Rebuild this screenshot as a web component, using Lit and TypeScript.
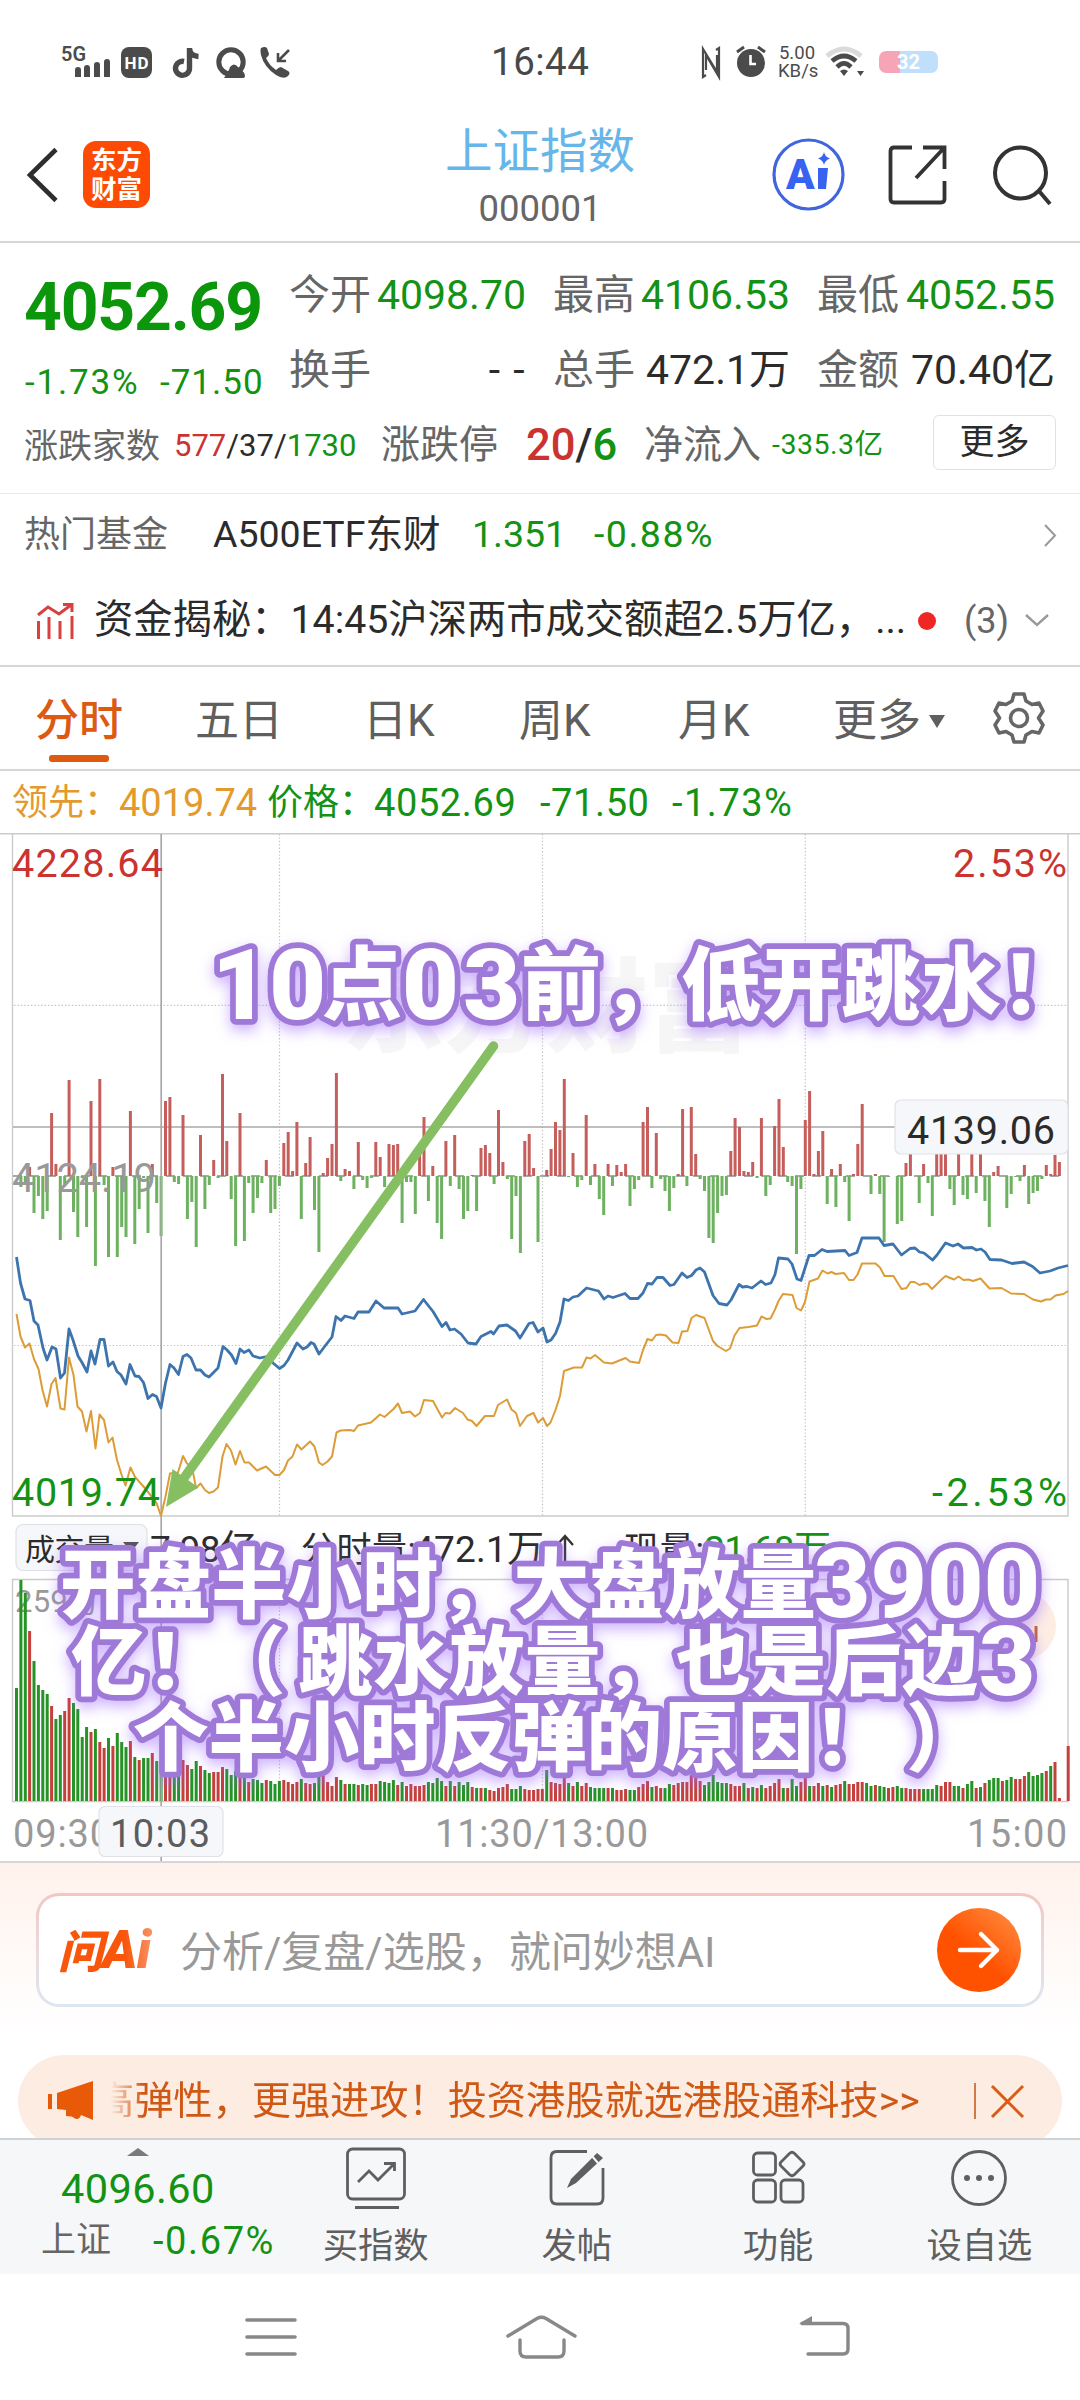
import { LitElement, html, svg, css } from 'lit';
import { customElement } from 'lit/decorators.js';

/* Minute momentum bars: positive is drawn upwards in red, negative downwards in green. */
const MOMENTUM = [
  0, -11, -7, 9, -37, -20, -43, -35, 63, 12, -64, -10, 96, -36, -61, -2, -51, 75, -90, 97,
  -9, -81, 9, -81, -51, -61, 65, -68, -33, -2, -57, 12, -27, -60, 75, 79, -6, -8, 61, -43,
  -26, -71, 41, -33, -9, 16, -2, 102, 35, -23, -70, 63, -65, -7, -37, -22, -7, 16, -37, -33,
  -10, 33, 44, 5, 54, -43, 13, 39, -34, -76, 3, 18, 32, 103, -5, 7, 5, -13, 34, -4,
  -12, -2, 34, 19, -11, 32, 31, 32, -47, -6, -6, -38, 21, 59, -25, 10, -47, -63, 35, -10,
  41, -13, -43, -35, 1, -35, 28, 31, 23, -8, 66, 14, -3, -63, -20, -77, 35, 42, 8, -66,
  0, 6, 27, 54, 46, 97, -1, 23, -11, -4, 61, -9, 12, -23, -39, 12, -10, 11, 4, 12,
  -30, -13, -4, 54, 69, -12, 43, -3, -15, -35, -12, 2, 67, -10, 69, 22, -3, -15, -62, -67,
  -37, -20, -19, 25, 58, 49, 5, 4, 14, -2, 58, -20, -9, 50, 77, 29, -6, -10, -78, -13,
  56, 85, 2, 25, 45, -28, 7, -31, 12, -6, -45, 2, 32, 72, 0, -18, 2, -18, -66, -1,
  0, -48, -45, 13, 25, 0, -27, 12, -7, -40, 40, 45, 35, -13, -29, 35, -19, -23, 35, -17,
  30, -25, -51, 4, 10, 0, -32, -18, -1, -5, 11, -28, -17, -15, -3, 11, 2, 21, 14,
];

/* Minute volume: the sign carries the colour, the magnitude the height. */
const VOLUME = [
  -113, -221, -208, 170, -140, -116, -111, -107, 95, -82, -86, 90, 103, -98, -92, -64, -74, 69, -72, 59,
  53, -63, 55, -68, -59, -54, 60, -44, 41, -43, -43, 48, -40, -40, 26, 26, -26, -28, 41, 36,
  -32, -40, 35, -31, -28, 29, 29, 34, -32, -26, -30, 24, -23, 19, -22, -21, -18, 21, -20, -17,
  -20, 21, 19, 17, 19, -22, 18, 17, -18, -24, 25, 19, 15, 24, -21, 17, -17, -17, 16, -17,
  -16, 17, 17, -20, -19, -18, -21, 16, -19, 15, 17, 15, 15, 16, -19, -18, -23, -20, 15, -20,
  15, -19, -16, -19, 14, -13, 13, -13, 11, 10, 13, 14, 17, -12, -12, -15, 12, 11, 11, 12,
  12, -31, 19, 18, 17, 23, -18, 15, -19, 15, 18, -14, -13, -13, -13, 13, -13, 11, 11, 12,
  -11, -11, 14, 17, 20, -14, 15, 13, -13, -17, 16, 18, 19, 19, 26, 24, 20, -16, -19, -26,
  -19, -18, -18, 17, 15, 15, -18, 13, -14, 13, -16, 13, 15, 18, 22, -13, 13, -22, -15, 19,
  24, -15, 15, 18, -15, 16, -14, 16, 17, -20, 17, 17, 19, 19, -18, -15, 16, -15, -14, 13,
  14, -15, -13, 13, 12, 12, 12, -12, -12, -12, -16, 15, 19, 19, -15, -15, 13, -17, -20, 13,
  -14, 18, -21, -23, -23, 20, -21, -24, 22, 22, 25, -29, -25, -26, -28, 30, -35, 39, 3, 0,
  55,
];

const PRICE_LINE =
  '16.5,1257 20.5,1283 25,1299 30,1300.5 34,1321 38,1325 43,1348 47,1360 52,1347 56,1349 60.5,1378 64.5,1373 69,1329 73,1340 78,1356 82,1362.5 87,1372 91,1351 95,1364 100,1339.5 104,1339.5 108.5,1366 113,1362 117,1371.5 121,1375 126,1384 130,1364.5 135,1376 139,1376.5 143.5,1382.5 148,1398.5 152.5,1394.5 156.5,1396.5 161,1408 165.5,1383 170,1364.5 174,1368 178.5,1374.5 183,1356.5 187,1354.5 191,1358 196,1370 200.5,1370 205,1375 209,1377 213,1373 218,1368 223,1346.5 227,1350 231.5,1355 236,1363.5 240,1349 244,1352.5 249,1350 253,1356 260,1358 267,1356.5 273,1363 279.5,1368.5 284,1365.5 288,1360 297,1343 303,1349 307,1347 311,1342.5 314,1344 319,1354 325,1346 332,1337 336,1316.5 341,1320.5 345,1316 354,1318.5 358,1312 369,1312 376,1301 384,1308 398,1308 402,1314 415,1311 423.5,1299.5 433,1311.5 442,1326.5 446,1322.5 450,1330 454.5,1329 461,1334 468,1343 476,1344 481,1336.5 491,1331.5 493.5,1334 499,1326 507,1325 515.5,1331 520,1338 529,1323.5 533,1322.5 538,1332 543,1328 547,1342 551,1340 555.5,1333.5 560,1322 564,1299 568.5,1300.5 573,1297 578,1296 586.5,1288 598.5,1291 604,1299 608,1296 613,1297.5 625,1293.5 630,1298.5 638,1298.5 643,1293 647.5,1283.5 652,1284 657,1277.5 663,1277.5 670,1285.5 674,1284.5 682,1273 687,1277.5 691.5,1275.5 696,1270 700,1268 704.5,1272 713,1295.5 719,1303.5 727,1305 731,1300 739,1284.5 742.5,1287 747,1286.5 752,1288 761,1281 765.5,1284.5 771,1283 775,1274.5 778.5,1258 788,1259 792,1264 797,1279 801,1280.5 805.5,1266.5 809,1255.5 814.5,1255.5 822,1249.5 827,1251.5 845,1250.5 849,1255.5 857,1252.5 862,1238 879,1238 884,1245.5 893,1244 901.5,1255 910,1248.5 915,1248 919.5,1252 924,1253 932.5,1260 937,1255 945.5,1243 953,1246 958,1244 963.5,1248 972,1247.5 976.5,1250 981,1249 985,1252 990,1259.5 1001.5,1260 1012,1263.5 1024,1262 1032.5,1266.5 1040,1273 1050,1271 1058,1268 1068,1265.5';

const LEAD_LINE =
  '16.5,1314 20.5,1336.5 25,1347.5 29.5,1343.5 34,1359 38.5,1369 42.5,1390 47,1406.5 51.5,1384 55.5,1378 60.5,1408.5 64.5,1409.5 69,1357.5 73.5,1375 77.5,1406.5 82,1411.5 86.5,1431.5 91,1411 95.5,1448.5 99.5,1414.5 104,1420 108.5,1442.5 112.5,1437.5 117,1460 121.5,1474.5 125.5,1485.5 130.5,1467.5 135,1477 143.5,1486.5 152,1497 156.5,1503 161,1516 165.5,1496.5 170,1473.5 178,1472.5 183,1456 187,1463.5 192,1467 196,1488 200.5,1483.5 205,1490 209,1493 213.5,1491.5 218,1487.5 222.5,1456.5 226.5,1444 231,1450.5 235.5,1464.5 240,1451 244.5,1462.5 249,1462.5 257,1470.5 266,1466.5 275,1475 279.5,1475 284,1470 288,1460.5 292.5,1456.5 297,1444.5 301.5,1449.5 310,1441.5 314.5,1446.5 319,1462.5 322.5,1465 327.5,1461.5 332,1456.5 336.5,1432.5 340.5,1430.5 350,1430 354,1431 358,1425.5 371,1422.5 380,1414.5 384.5,1417 393.5,1409 398,1403.5 402,1413 410,1411.5 415,1416.5 420,1413 424,1400 433,1401 442,1417.5 445.5,1413 450,1413.5 455,1408 463,1413 467.5,1419.5 472,1421 476.5,1426 485,1416 494,1416 498,1405 507,1399.5 511.5,1409.5 516,1413 520,1426 527,1416 533.5,1413 538,1422.5 543,1418 547,1426 550.5,1422.5 555.5,1410 560,1396 564,1371 574,1367.5 582,1367.5 586.5,1357.5 590.5,1358.5 595,1355 604,1362.5 612,1363.5 625.5,1358 630,1361.5 639,1363 643,1350 647.5,1339 652,1340.5 656,1335 660.5,1334.5 666,1335.5 672.5,1342.5 678.5,1343 682,1331.5 687.5,1331 691.5,1318 696,1315 704.5,1318 713,1341 717.5,1346 726,1351 730,1348.5 734.5,1335.5 739.5,1328 748.5,1327 757,1325.5 761.5,1316.5 766.5,1319 770.5,1318.5 775,1309.5 778.5,1301 783,1294 792.5,1295 796.5,1308 801,1310.5 805,1302 809.5,1281.5 818,1278.5 822.5,1270.5 827.5,1273.5 831.5,1272 835.5,1274 844,1273 849,1280 853.5,1280 857.5,1274.5 862,1263.5 875.5,1263.5 880,1267.5 884.5,1276 893.5,1276 901.5,1289 906.5,1288 910.5,1282 914.5,1282 919.5,1285 924,1283.5 927.5,1284 932,1289 941,1280 945.5,1276 954,1279.5 958.5,1276.5 963.5,1280 968.5,1279.5 973,1281 980.5,1278.5 989.5,1288.5 1001.5,1288 1011,1293.5 1024,1294 1033,1299.5 1041,1301.5 1046,1299.5 1050.5,1299.5 1055.5,1295.5 1063.5,1294 1068,1291';

const STEP = 4.382;
const FIRST = 16.5;

function bars(data: number[], base: number, grow: boolean, negative: boolean) {
  let d = '';
  data.forEach((v, i) => {
    if (v === 0 || v < 0 !== negative) return;
    const x = (FIRST + i * STEP).toFixed(1);
    const h = Math.abs(v);
    d += `M${x} ${base}v${!grow && negative ? h : -h}`;
  });
  return d;
}

function label(x: number, y: number, size: number, cls: string, text: string, len: number) {
  return svg`<text class=${cls} x=${x} y=${y} font-size=${size} textLength=${len} lengthAdjust="spacing">${text}</text>`;
}

/* One run of an outlined caption. */
function run(x: number, y: number, size: number, text: string, len: number, digits = false) {
  return svg`<text class=${digits ? 'cap num' : 'cap'} x=${x} y=${y} font-size=${size} textLength=${len}>${text}</text>`;
}

@customElement('intraday-chart')
export class IntradayChart extends LitElement {
  static styles = css`
    :host { display: block; }
    svg { display: block; }
    text { font-family: Roboto, 'Noto Sans CJK SC', sans-serif; white-space: pre; }
    .red { fill: #cb3331; }
    .green { fill: #139213; }
    .gray { fill: #999; }
    .ink { fill: #2b2b2b; }
    .mid { fill: #5c5c5c; }
    .frame { fill: none; stroke: #cbcbcb; stroke-width: 1.4; }
    .dots { stroke: #c4c4c4; stroke-width: 1.2; stroke-dasharray: 1.4 2; }
    .cross { stroke: #a8a8a8; stroke-width: 1.7; }
    .up { stroke: #c65e5b; stroke-width: 3; fill: none; }
    .down { stroke: #6db161; stroke-width: 3; fill: none; }
    .vup { stroke: #c4403d; stroke-width: 3; fill: none; }
    .vdown { stroke: #259325; stroke-width: 3; fill: none; }
    .tag { fill: #f6f7fa; stroke: #dfe1e6; stroke-width: 1.2; }
    .price { fill: none; stroke: #3d74ad; stroke-width: 2.8; stroke-linejoin: round; }
    .lead { fill: none; stroke: #dc9c38; stroke-width: 2; stroke-linejoin: round; }
    .mark { fill: #f6f6f6; font-weight: 900; font-family: 'Noto Sans CJK SC', sans-serif; }
    .cap {
      font-family: 'Noto Sans CJK SC', sans-serif; font-weight: 900;
      fill: #fff; stroke: #9f79d8; stroke-width: 11.5; stroke-linejoin: round; paint-order: stroke;
    }
    .num { font-family: Roboto, sans-serif; }
    .glow { filter: drop-shadow(0 6px 7px rgba(160, 105, 255, 0.5)); }
  `;

  render() {
    return html`<svg width="1080" height="1028" viewBox="0 833 1080 1028">
      ${label(342, 1044, 102, 'mark', '东方财富', 408)}
      <path class="frame" d="M0 833.7H1080M12.5 834V1516H1068V834" />
      <path class="dots" d="M14 1005.3H1068M14 1345.5H1068M279.5 834V1516M542.5 834V1516M805.3 834V1516" />
      <path d="M13 1176H1062" stroke="#8d8d8d" stroke-width="1.4" stroke-dasharray="9 8" />
      <path class="cross" d="M13 1127H1068" />
      <path class="up" d=${bars(MOMENTUM, 1176, false, false)} />
      <path class="down" d=${bars(MOMENTUM, 1176, false, true)} />
      <path class="cross" d="M161.2 834V1516" />
      ${label(12, 1191.5, 40, 'gray', '4124.19', 144)}
      ${label(12, 877, 39.5, 'red', '4228.64', 151)}
      ${label(953, 877, 39.5, 'red', '2.53%', 114)}
      ${label(932, 1506, 39.5, 'green', '-2.53%', 135)}
      <polyline class="lead" points=${LEAD_LINE} />
      <polyline class="price" points=${PRICE_LINE} />
      ${label(12, 1506, 39.5, 'green', '4019.74', 148)}
      <rect class="tag" x="895" y="1100" width="173" height="54" rx="6" />
      ${label(907, 1144, 39.5, 'ink', '4139.06', 148)}

      <path class="frame" d="M12.5 1579.5H1068V1801.5H12.5Z" />
      <path class="dots" d="M279.5 1580V1801M542.5 1580V1801M805.3 1580V1801" />
      <circle cx="1022" cy="1626" r="34" fill="#fdeee4" />
      <path d="M1036 1626V1642" stroke="#c2663a" stroke-width="3" />
      ${label(15, 1612, 31, 'gray', '259万', 84)}
      <path class="vup" d=${bars(VOLUME, 1801, true, false)} />
      <path class="vdown" d=${bars(VOLUME, 1801, true, true)} />
      <path class="cross" d="M161.2 1516V1861" />
      <rect class="tag" x="16" y="1524.5" width="131" height="46" rx="7" />
      ${label(25, 1560, 30, 'ink', '成交量', 89)}
      <path d="M123 1542H139L131 1552Z" fill="#555" />
      ${label(150, 1562, 37, 'ink', '7.98亿', 107)}
      ${label(301, 1562, 35, 'ink', '分时量:', 115)}
      ${label(413, 1562, 37, 'ink', '472.1万', 131)}
      <path d="M565 1563V1536M557 1545L565 1536L573 1545" fill="none" stroke="#333" stroke-width="2.4" />
      ${label(624, 1562, 35, 'ink', '现量:', 80)}
      ${label(704, 1562, 37, 'green', '21.68万', 127)}

      ${label(13, 1847, 38, 'gray', '09:30', 98)}
      ${label(435, 1847, 38, 'gray', '11:30/13:00', 213)}
      ${label(967, 1847, 38, 'gray', '15:00', 100)}
      <rect class="tag" x="99" y="1806.5" width="124" height="50" rx="6" />
      ${label(110, 1847, 38, 'mid', '10:03', 100)}

      <path d="M493.5 1046L184 1478" stroke="#86bf62" stroke-width="9.5" stroke-linecap="round" />
      <path d="M166 1507L172.5 1469L198.5 1487.5Z" fill="#86bf62" />

      <g class="glow">
        ${run(212, 1019, 98, '10', 114, true)}
        ${run(322, 1013, 80, '点', 80)}
        ${run(402, 1019, 98, '03', 118, true)}
        ${run(521, 1013, 80, '前，低开跳水！', 560)}
      </g>
      <g class="glow">
        ${run(60, 1612, 75.6, '开盘半小时，大盘放量', 756)}
        ${run(814, 1617, 97, '3900', 226, true)}
        ${run(71, 1689, 75.6, '亿！', 151)}
        ${run(210, 1689, 75.6, '（', 75.6)}
        ${run(298, 1689, 75.6, '跳水放量，也是后边', 680)}
        ${run(979, 1695, 97, '3', 56, true)}
        ${run(133, 1765, 75.6, '个半小时反弹的原因！', 756)}
        ${run(906, 1765, 75.6, '）', 75.6)}
      </g>
    </svg>`;
  }
}

@customElement('app-root')
export class AppRoot extends LitElement {
  static styles = css`
    :host {
      display: block; width: 1080px; height: 2400px; overflow: hidden; background: #fff;
      color: #2b2b2b; font-family: Roboto, 'Noto Sans CJK SC', sans-serif; line-height: 1;
    }
    * { box-sizing: border-box; }
    svg { display: block; flex: none; overflow: visible; }
    .g { color: #139213; }
    .r { color: #cb3331; }
    .k { color: #666; }
    .status { height: 108px; padding: 16px 0 0; display: grid; grid-template-columns: 62px 429px 210px 1fr; align-items: center; }
    .sl { grid-column: 2; display: grid; grid-template-columns: 59px 51px 43px 44px 32px; align-items: center; }
    .clock { font-size: 38.5px; color: #484848; letter-spacing: 0.5px; }
    .sr { display: grid; grid-template-columns: 35px 42px 48px 53px 59px; align-items: center; }
    .speed { font-size: 18.5px; line-height: 18px; color: #4b4b4b; text-align: center; width: 38px; }
    .batt { height: 22px; border-radius: 7px; background: linear-gradient(90deg, #f5a5b5 36%, #bfdffc 36%); color: #fff; font-size: 20px; font-weight: 700; display: grid; place-items: center; }
    .head { height: 135px; border-bottom: 2px solid #d6d6d6; display: grid; grid-template-columns: 27px 56px 317px 280px 92px 1fr; align-items: center; }
    .logo { grid-column: 3; width: 67px; height: 67px; border-radius: 13px; background: #fd4a05; color: #fff; font-size: 25.5px; line-height: 29px; font-weight: 700; display: grid; place-content: center; text-align: center; }
    .back { grid-column: 2; }
    .title { text-align: center; padding-top: 7px; }
    .name { font-size: 47.5px; color: #66b6ea; }
    .code { font-size: 36.5px; color: #666; margin-top: 15px; }
    .acts { grid-column: 6; display: grid; grid-template-columns: 116px 105px 60px; align-items: center; }
    .stats { height: 251px; padding: 15px 25px 0; border-bottom: 1px solid #e9e9e9; }
    .top { display: grid; grid-template-columns: 264px 766px; height: 150px; }
    .main { padding-top: 17px; }
    .big { font-size: 66px; font-weight: 700; letter-spacing: -1.2px; color: #0c960c; margin-left: -1px; }
    .chg { margin-top: 24px; font-size: 35px; display: grid; grid-template-columns: 135px 1fr; }
    .chg span { letter-spacing: 1px; white-space: nowrap; }
    .chg span:first-child { letter-spacing: 1.8px; }
    .cells { display: grid; grid-template-columns: 237px 237px 238px; column-gap: 27px; grid-auto-rows: 75px; }
    .cell { display: flex; justify-content: space-between; align-items: center; font-size: 41px; white-space: nowrap; }
    .cell .k { font-size: 41px; }
    .more-row { height: 75px; margin-left: -1px; display: grid; grid-template-columns: 150px 207px 145px 118px 128px 161px 123px; align-items: center; white-space: nowrap; }
    .f33 { font-size: 34px; }
    .f31 { font-size: 31px; }
    .f38 { font-size: 39px; }
    .f29 { font-size: 28.5px; letter-spacing: 0.5px; }
    .lim { font-size: 43.5px; font-weight: 500; }
    .btn { height: 55px; border: 1.5px solid #dfe2e4; border-radius: 6px; font-size: 35px; display: grid; place-items: center; margin-top: -6px; }
    .fund { height: 80px; padding: 2px 0 0 24px; display: grid; grid-template-columns: 189px 259px 122px 450px 1fr; align-items: center; font-size: 37.5px; white-space: nowrap; }
    .fund .k { font-size: 36px; }
    .pc { letter-spacing: 1.5px; }
    .news { height: 93px; border-bottom: 2px solid #d6d6d6; padding: 2px 0 0 36px; display: grid; grid-template-columns: 58px 824px 46px 61px 1fr; align-items: center; white-space: nowrap; font-size: 39.3px; }
    .dot { width: 18px; height: 18px; border-radius: 50%; background: #ee2724; }
    .cnt { font-size: 36px; color: #666; }
    .tabs { height: 104px; border-bottom: 2px solid #d6d6d6; padding-left: 35px; display: grid; grid-template-columns: 160px 168px 156px 159px 155px 160px 1fr; align-items: center; font-size: 44px; color: #5f5f5f; }
    .tab { display: flex; align-items: center; height: 100%; position: relative; padding-top: 6px; }
    .on { color: #dc5a12; font-weight: 500; }
    .on::after { content: ''; position: absolute; left: 14px; bottom: 7px; width: 60px; height: 7px; border-radius: 3px; background: #df590f; }
    .caret { margin-left: 8px; border: 8px solid transparent; border-top: 13px solid #5f5f5f; border-bottom: 0; }
    .legend { height: 62px; padding: 2px 0 0 12px; display: grid; grid-template-columns: 107px 148px 107px 166px 132px 1fr; align-items: center; font-size: 38px; letter-spacing: 0.6px; white-space: nowrap; }
    .legend .c { font-size: 36px; letter-spacing: 0; }
    .legend .o:nth-child(2) { letter-spacing: 0; }
    .o { color: #e39a2c; }
    .ai { height: 277px; border-top: 2px solid #d6d6d6; padding: 30px 18px 0; background: linear-gradient(#fff2ec, #fffaf8 100px, #fff 170px); overflow: hidden; }
    .ask { margin: 0 18px; height: 114px; border: 3px solid transparent; border-radius: 23px; padding: 0 20px 0 19px; display: flex; align-items: center; background: linear-gradient(#fff, #fff) padding-box, linear-gradient(#f3c7c0, #ead9dd 50%, #dde6f0) border-box; }
    .wen { width: 122px; font-size: 54px; font-weight: 900; font-style: italic; letter-spacing: -1px; background: linear-gradient(90deg, #f9560b 55%, #f99a72 80%); -webkit-background-clip: text; background-clip: text; color: transparent; padding: 4px 0; white-space: nowrap; }
    .wen b { font-size: 45px; font-weight: 900; }
    .ph { flex: 1; font-size: 42px; color: #999; padding-top: 5px; }
    .go { width: 84px; height: 84px; border-radius: 50%; background: linear-gradient(40deg, #ff5200 45%, #ff9145); display: grid; place-items: center; }
    .ban { margin-top: 48px; height: 92px; border-radius: 46px; background: #fcece2; padding-left: 30px; display: grid; grid-template-columns: 63px 863px 17px 1fr; align-items: center; color: #cf5815; font-size: 39.2px; white-space: nowrap; }
    .roll { overflow: hidden; line-height: 50px; text-indent: -16px; -webkit-mask: linear-gradient(90deg, transparent, #000 32px); mask: linear-gradient(90deg, transparent, #000 32px); }
    .bar { width: 2px; height: 36px; background: #cf7a48; }
    .foot { height: 136px; background: #f6f7f9; border-top: 2px solid #cfd2d4; display: grid; grid-template-columns: 275px repeat(4, 201.25px); }
    .idx { display: grid; grid-template-rows: 28px 54px 1fr; white-space: nowrap; }
    .tri { margin: 8px 0 0 127px; width: 0; height: 0; border: 11px solid transparent; border-bottom: 8px solid #7a7a7a; border-top: 0; }
    .v { padding-left: 61px; font-size: 41.5px; letter-spacing: 0.4px; }
    .w { padding-left: 41px; display: grid; grid-template-columns: 112px 1fr; font-size: 38px; letter-spacing: 1.6px; }
    .w .k { font-size: 35px; letter-spacing: 0; padding-top: 1px; }
    .act { display: flex; flex-direction: column; align-items: center; font-size: 35.3px; color: #5f5f5f; padding-top: 7px; }
    .act svg { margin-bottom: 20px; }
    .nav { height: 126px; display: grid; grid-template-columns: 245px 261px 292px 1fr; align-items: center; }
    .nav svg:first-child { grid-column: 2; }
  `;

  private cell(name: string, value: string, cls = '') {
    return html`<div class="cell"><span class="k">${name}</span><span class=${cls}>${value}</span></div>`;
  }

  render() {
    return html`
      <div class="status">
        <div class="sl">
          <svg width="50" height="34" viewBox="0 0 50 34" fill="#4b4b4b">
            <text x="-1" y="16" font-size="20" font-weight="600" textLength="25" lengthAdjust="spacingAndGlyphs">5G</text>
            <path d="M13 25a2.500 2.500 0 0 1 6 0v7h-6zM22 23a2.500 2.500 0 0 1 6 0v9h-6zM32 20a2.500 2.500 0 0 1 6 0v12h-6zM42 17a2.500 2.500 0 0 1 6 0v15h-6z" />
          </svg>
          <svg width="31" height="31" viewBox="0 0 31 31"><rect width="31" height="31" rx="8" fill="#4b4b4b" /><text x="3.500" y="21.500" font-size="17" font-weight="700" fill="#fff" textLength="24">HD</text></svg>
          <svg width="28" height="31" viewBox="0 0 28 31" fill="none" stroke="#4b4b4b" stroke-width="5.400"><path d="M12 14.500A7 7 0 1 0 17.500 21V1M17.500 1.500Q18 9 26.500 9.500" /></svg>
          <svg width="32" height="31" viewBox="0 0 32 31"><circle cx="16" cy="15" r="12.200" fill="none" stroke="#4b4b4b" stroke-width="5" /><path d="M9 31Q14 24 15 20Q19 15 23 20Q30 25 30 29Q30 31 27 31Z" fill="#4b4b4b" /></svg>
          <svg width="32" height="31" viewBox="0 0 32 31" fill="#4b4b4b"><path d="M2 1Q6 -1 8 1L10 7Q10 9 7 11Q10 18 17 23Q20 20 22 20L29 24Q32 26 29 29Q25 33 17 28Q5 20 2 8Q1 3 2 1Z" /><path d="M30 3L20 13M19 6V14H27" fill="none" stroke="#4b4b4b" stroke-width="2.600" /></svg>
        </div>
        <span class="clock">16:44</span>
        <div class="sr">
          <svg width="20" height="31" viewBox="0 0 20 31" fill="none" stroke="#4b4b4b" stroke-width="2.200"><path d="M5 28L2 30V2L16 25V8M15 3L18 1V30L5 8V23" /></svg>
          <svg width="30" height="32" viewBox="0 0 30 32"><circle cx="15" cy="17" r="14" fill="#4b4b4b" /><path d="M14.500 9V18H20" fill="none" stroke="#fff" stroke-width="2.600" /><path d="M1 6L8 1M29 6L22 1" stroke="#4b4b4b" stroke-width="3" /></svg>
          <span class="speed">5.00 KB/s</span>
          <svg width="38" height="30" viewBox="0 0 38 30" fill="none" stroke="#4b4b4b" stroke-width="4.600"><path d="M1 9Q18 -5 35 9" stroke="#dadada" stroke-width="5" /><path d="M6 14Q18 4 30 14M11 20Q18 13 25 20" /><path d="M14 24Q18 21 22 24L18 29Z" fill="#4b4b4b" stroke="none" /><path d="M31 24H38L34.500 29Z" fill="#4b4b4b" stroke="none" /></svg>
          <span class="batt">32</span>
        </div>
      </div>

      <div class="head">
        <svg class="back" width="31" height="54" viewBox="0 0 31 54" fill="none" stroke="#2e2e2e" stroke-width="4.600"><path d="M29 1.500L3 27L29 52.500" /></svg>
        <div class="logo">东方<br />财富</div>
        <div class="title"><div class="name">上证指数</div><div class="code">000001</div></div>
        <div class="acts">
          <svg width="73" height="73" viewBox="0 0 73 73"><circle cx="36.500" cy="36.500" r="34.500" fill="#fff" stroke="#4065dc" stroke-width="3.200" /><text x="14" y="51" font-size="42" font-weight="900" fill="#3763f0">A</text><path d="M46 30H56L54 51H46Z" fill="#3763f0" /><path d="M52 14Q53 19 58 20.500Q53 22 52 27Q51 22 46 20.500Q51 19 52 14Z" fill="#3763f0" /></svg>
          <svg width="60" height="60" viewBox="0 0 60 60" fill="none" stroke="#333" stroke-width="3.800"><path d="M24 2.500H6Q2.500 2.500 2.500 6V54Q2.500 57.500 6 57.500H53Q56.500 57.500 56.500 54V36M35 2.500H56.500V24M56 3L28 33" /></svg>
          <svg width="60" height="62" viewBox="0 0 60 62" fill="none" stroke="#333" stroke-width="4"><circle cx="27.500" cy="29" r="25.500" /><path d="M46 47L57 60" /></svg>
        </div>
      </div>

      <div class="stats">
        <div class="top">
          <div class="main">
            <div class="big">4052.69</div>
            <div class="chg g"><span>-1.73%</span><span>-71.50</span></div>
          </div>
          <div class="cells">
            ${this.cell('今开', '4098.70', 'g')}${this.cell('最高', '4106.53', 'g')}${this.cell('最低', '4052.55', 'g')}
            ${this.cell('换手', '-- --'.replace('-- --', '- -'), 'pc')}${this.cell('总手', '472.1万')}${this.cell('金额', '70.40亿')}
          </div>
        </div>
        <div class="more-row">
          <span class="k f33">涨跌家数</span>
          <span class="f31"><span class="r">577</span>/37/<span class="g">1730</span></span>
          <span class="k f38">涨跌停</span>
          <span class="lim"><span class="r">20</span>/<span class="g">6</span></span>
          <span class="k f38">净流入</span>
          <span class="g f29">-335.3亿</span>
          <span class="btn">更多</span>
        </div>
      </div>

      <div class="fund">
        <span class="k">热门基金</span><span>A500ETF东财</span><span class="g">1.351</span><span class="g pc">-0.88%</span>
        <svg width="12" height="23" viewBox="0 0 12 23" fill="none" stroke="#999" stroke-width="2"><path d="M1 1L11 11.500L1 22" /></svg>
      </div>
      <div class="news">
        <svg width="39" height="36" viewBox="0 0 39 36" fill="none" stroke="#d8413f" stroke-width="3"><path d="M2.500 36V18M13 36V14M24 36V18M36 36V13" /><path d="M2 12L12 4L23 11L35 2M27 1.500H36V9" /></svg>
        <span>资金揭秘：14:45沪深两市成交额超2.5万亿，...</span>
        <span class="dot"></span><span class="cnt">(3)</span>
        <svg width="24" height="13" viewBox="0 0 24 13" fill="none" stroke="#999" stroke-width="2.400"><path d="M1 1L12 11L23 1" /></svg>
      </div>
      <div class="tabs">
        <span class="tab on">分时</span><span class="tab">五日</span><span class="tab">日K</span><span class="tab">周K</span><span class="tab">月K</span>
        <span class="tab">更多<i class="caret"></i></span>
        <svg width="52" height="52" viewBox="0 0 52 52" fill="none" stroke="#666" stroke-width="3.600" stroke-linejoin="round"><path d="M21 2H31L33 9L39 12.500L46 11L50 19L45.500 26L50 33L46 41L39 39.500L33 43L31 50H21L19 43L13 39.500L6 41L2 33L6.500 26L2 19L6 11L13 12.500L19 9Z" /><circle cx="26" cy="26" r="8.500" /></svg>
      </div>
      <div class="legend">
        <span class="o c">领先：</span><span class="o">4019.74</span><span class="g c">价格：</span><span class="g">4052.69</span><span class="g">-71.50</span><span class="g pc">-1.73%</span>
      </div>

      <intraday-chart></intraday-chart>

      <div class="ai">
        <div class="ask">
          <span class="wen"><b>问</b>Ai</span>
          <span class="ph">分析/复盘/选股，就问妙想AI</span>
          <span class="go"><svg width="42" height="38" viewBox="0 0 42 38" fill="none" stroke="#fff" stroke-width="4.400" stroke-linecap="round" stroke-linejoin="round"><path d="M2 19H39M23 3L39 19L23 35" /></svg></span>
        </div>
        <div class="ban">
          <svg width="46" height="40" viewBox="0 0 46 40" fill="#e95a08"><path d="M0 13H4V28H0zM9 12L45 0V39L33 34Q31 40 26 37Q25 35 18 35V29L9 28Z" /></svg>
          <span class="roll">高弹性，更强进攻！投资港股就选港股通科技&gt;&gt;</span>
          <i class="bar"></i>
          <svg width="33" height="33" viewBox="0 0 33 33" stroke="#d85c16" stroke-width="3"><path d="M1 1L32 32M32 1L1 32" /></svg>
        </div>
      </div>

      <div class="foot">
        <div class="idx">
          <i class="tri"></i>
          <span class="v g">4096.60</span>
          <span class="w g"><span class="k">上证</span><span>-0.67%</span></span>
        </div>
        <div class="act">
          <svg width="60" height="62" viewBox="0 0 60 62" fill="none" stroke="#5f5f5f" stroke-width="2.800"><rect x="1.500" y="2" width="57" height="50" rx="5" /><path d="M9 60.500H53" stroke-width="3.200" /><path d="M12 35L23 24L32 33L48 17M38 16.500H48.500V24" /></svg>
          买指数
        </div>
        <div class="act">
          <svg width="56" height="62" viewBox="0 0 56 62" fill="none" stroke="#5f5f5f" stroke-width="2.800"><path d="M38 4.500H8Q2 4.500 2 10.500V51Q2 57 8 57H48Q54 57 54 51V21" /><path d="M48 6L54 11L27 36L18 41L22 32Z" fill="#5f5f5f" stroke="none" /><path d="M42 8L49 16" stroke="#f6f7f9" stroke-width="2" /></svg>
          发帖
        </div>
        <div class="act">
          <svg width="52" height="62" viewBox="0 0 52 62" fill="none" stroke="#5f5f5f" stroke-width="2.800"><rect x="1.500" y="6" width="22" height="22" rx="4" /><rect x="1.500" y="33" width="22" height="22" rx="4" /><rect x="29" y="33" width="22" height="22" rx="4" /><path d="M37.500 6.500Q40 4 42.500 6.500L51 15Q53 17 51 19L42.500 27.500Q40 30 37.500 27.500L29 19Q27 17 29 15Z" /></svg>
          功能
        </div>
        <div class="act">
          <svg width="56" height="62" viewBox="0 0 56 62"><circle cx="28" cy="31" r="26.500" fill="none" stroke="#5f5f5f" stroke-width="2.800" /><g fill="#5f5f5f"><circle cx="16" cy="31" r="3" /><circle cx="28" cy="31" r="3" /><circle cx="40" cy="31" r="3" /></g></svg>
          设自选
        </div>
      </div>
      <div class="nav">
        <svg width="52" height="42" viewBox="0 0 52 42" stroke="#888" stroke-width="3.600" stroke-linecap="round"><path d="M2 4H50M2 21H50M2 38H50" /></svg>
        <svg width="71" height="44" viewBox="0 0 71 44" fill="none" stroke="#888" stroke-width="3.400" stroke-linecap="round" stroke-linejoin="round"><path d="M2 21L31 3.500Q35.500 1 40 3.500L69 21M14 25V36Q14 42 20 42H52Q58 42 58 36V25" /></svg>
        <svg width="52" height="44" viewBox="0 0 52 44" fill="none" stroke="#888" stroke-width="3.400" stroke-linecap="round"><path d="M4 8.500H45Q50 8.500 50 13.500V34Q50 39 45 39H10" /><path d="M1 8.500L14 1V9Z" fill="#888" stroke="none" /></svg>
      </div>
    `;
  }
}
